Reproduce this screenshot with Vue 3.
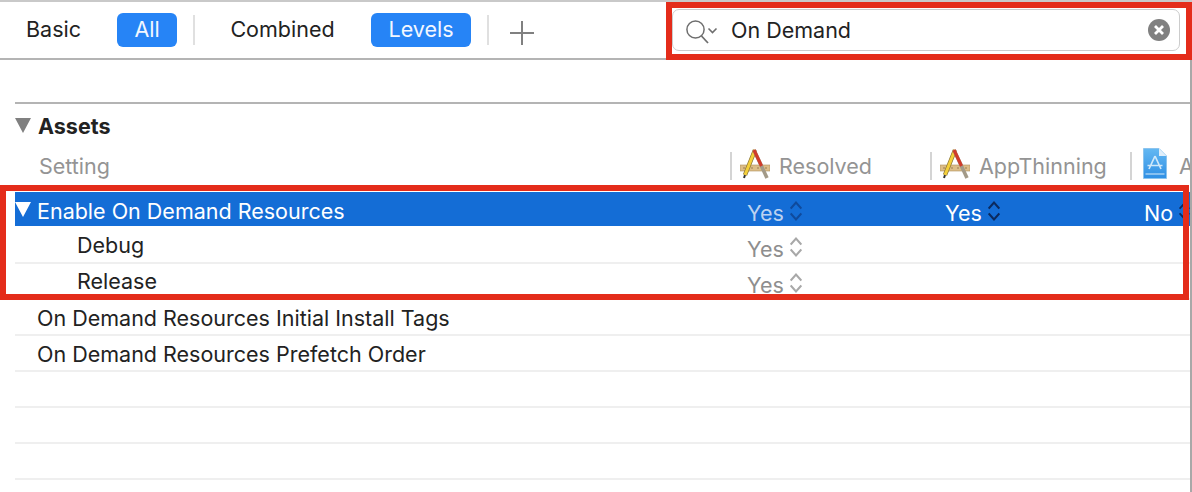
<template>
  <div class="page">
    <div class="toolbar">
      <span class="tab basic">Basic</span>
      <span class="tab active all">All</span>
      <i class="sep"></i>
      <span class="tab combined">Combined</span>
      <span class="tab active levels">Levels</span>
      <i class="sep"></i>
      <svg class="plus" width="24" height="24" viewBox="0 0 24 24">
        <path d="M0 12H24M12 0V24" stroke="#808080" stroke-width="2" />
      </svg>
      <div class="search">
        <svg class="search-icon" width="32" height="26" viewBox="0 0 32 26">
          <circle cx="9.5" cy="10.5" r="8.6" fill="none" stroke="#6e6e6e" stroke-width="1.5" />
          <path d="M15.5 17L22 24" stroke="#6e6e6e" stroke-width="1.8" />
          <path d="M22.5 9.5L26.5 13.5L30.5 9.5" fill="none" stroke="#6e6e6e" stroke-width="1.6" />
        </svg>
        <span class="search-text">On Demand</span>
        <svg class="clear" width="22" height="22" viewBox="0 0 22 22">
          <circle cx="11" cy="11" r="11" fill="#808080" />
          <path d="M7 7L15 15M15 7L7 15" stroke="#fff" stroke-width="2.8" />
        </svg>
      </div>
    </div>

    <div class="section">
      <div class="section-title">
        <span class="tri gray"></span>
        <span>Assets</span>
      </div>
      <div class="row head">
        <span class="name">Setting</span>
        <span v-for="col in columns" :key="col.label" class="col-head">
          <svg v-if="col.icon === 'tool'" class="tool-icon" width="30" height="30" viewBox="0 0 30 30">
            <rect x="0" y="16" width="30" height="6" fill="#dcbd88" stroke="#b08f5c" stroke-width="0.6" />
            <path d="M4 18V20M8 18V20M12 18V20M18 18V20M22 18V20M26 18V20" stroke="#8a6f45" stroke-width="0.8" />
            <path d="M15 1L5 26" stroke="#8a7436" stroke-width="4.4" />
            <path d="M15 1L5 26" stroke="#f4cf3a" stroke-width="3" />
            <path d="M5 26L4 29" stroke="#333" stroke-width="2" />
            <path d="M14 1L27 29" stroke="#a39a88" stroke-width="3.6" />
            <path d="M14 1L21.5 17" stroke="#cf3b2a" stroke-width="3.2" />
          </svg>
          <svg v-else class="tool-icon app" width="24" height="31" viewBox="0 0 24 31">
            <defs>
              <linearGradient id="appFill" x1="0" y1="0" x2="0" y2="1">
                <stop offset="0" stop-color="#64b8f2" />
                <stop offset="1" stop-color="#2f8fe4" />
              </linearGradient>
            </defs>
            <path d="M0.5 0.5H16L23.5 8V30.5H0.5Z" fill="url(#appFill)" stroke="#8cc4ee" stroke-width="1" />
            <path d="M16 0.5V8H23.5Z" fill="#e0eefa" />
            <path d="M2.5 26H21.5" stroke="#d8ecfa" stroke-width="1" />
            <path d="M12 8L6 21M12 8L18 21M4.5 17.5H19.5" stroke="#cfe8fa" stroke-width="1.7" fill="none" />
          </svg>
          {{ col.label }}
        </span>
      </div>

      <div
        v-for="row in rows"
        :key="row.id"
        class="row"
        :class="{ selected: row.selected, line: !row.selected, child: row.child }"
      >
        <span class="name">
          <span v-if="row.selected" class="tri white"></span>
          {{ row.label }}
        </span>
        <span v-for="(cell, i) in row.cells" :key="i" class="cell" :class="[`col-${i}`, { bold: row.selected && i > 0 }]">
          {{ cell }}
          <svg class="stepper" width="12" height="20" viewBox="0 0 12 20">
            <path d="M0.7 7.5L6 1.5L11.3 7.5M0.7 12.5L6 18.5L11.3 12.5" fill="none" stroke="currentColor" stroke-width="2" />
          </svg>
        </span>
      </div>
    </div>

    <div class="edge"></div>
    <div class="mark mark-search"></div>
    <div class="mark mark-rows"></div>
  </div>
</template>

<script setup>
const columns = [
  { label: 'Resolved', icon: 'tool' },
  { label: 'AppThinning', icon: 'tool' },
  { label: 'A', icon: 'app' },
];

const rows = [
  { id: 1, label: 'Enable On Demand Resources', selected: true, cells: ['Yes', 'Yes', 'No'] },
  { id: 2, label: 'Debug', child: true, cells: ['Yes'] },
  { id: 3, label: 'Release', child: true, cells: ['Yes'] },
  { id: 4, label: 'On Demand Resources Initial Install Tags', cells: [] },
  { id: 5, label: 'On Demand Resources Prefetch Order', cells: [] },
  { id: 6, label: '', cells: [] },
  { id: 7, label: '', cells: [] },
  { id: 8, label: '', cells: [] },
];
</script>

<style>
body {
  background: #fff;
}
</style>

<style scoped>
.page {
  position: relative;
  width: 1192px;
  height: 492px;
  overflow: hidden;
  background: #fff;
  font-family: Inter, "Liberation Sans", sans-serif;
  font-size: 21.5px;
  color: #222;
}

.toolbar {
  display: flex;
  align-items: center;
  height: 56px;
  border-top: 2px solid #c9c9c9;
  border-bottom: 2px solid #b4b4b4;
}

.tab {
  height: 34px;
  line-height: 33px;
  text-align: center;
  border-radius: 6px;
}

.tab.active {
  background: #2684f6;
  color: #f2f7ff;
}

.basic { margin-left: 26px; width: 55px; }
.all { margin-left: 36px; width: 60px; }
.combined { margin-left: 35px; width: 105px; }
.levels { margin-left: 36px; width: 100px; }

.sep {
  width: 2px;
  height: 30px;
  margin-left: 16px;
  background: #e0e0e0;
}

.plus {
  margin: 6px 0 0 21px;
}

.search {
  display: flex;
  align-items: center;
  box-sizing: border-box;
  width: 508px;
  height: 42px;
  margin-left: 138px;
  padding: 0 9px 0 13px;
  border: 1px solid #cccccc;
  border-radius: 7px;
}

.search-icon {
  margin-top: 4px;
}

.search-text {
  margin-left: 13px;
  flex: 1;
}

.section {
  margin: 42px 2px 0 15px;
  border-top: 2px solid #b4b4b4;
}

.section-title {
  display: flex;
  align-items: center;
  gap: 7px;
  height: 44px;
  font-weight: 700;
}

.tri {
  display: inline-block;
  width: 0;
  height: 0;
  border-left: 8.5px solid transparent;
  border-right: 8.5px solid transparent;
}

.tri.gray {
  margin-top: -2px;
  border-top: 15px solid #808080;
}

.tri.white {
  position: absolute;
  left: 0;
  top: 10px;
  border-top: 15px solid #fff;
}

.row {
  display: grid;
  grid-template-columns: 715px 200px 200px 60px;
  align-items: center;
  box-sizing: border-box;
  height: 36px;
  position: relative;
  white-space: nowrap;
}

.head {
  height: 36px;
  margin-bottom: 8px;
  color: #949494;
}

.name {
  padding-left: 24px;
}

.line .name {
  padding-left: 22px;
  padding-top: 1px;
}

.line.child .name {
  padding-left: 62px;
  padding-top: 0;
  padding-bottom: 1px;
}

.col-head {
  display: flex;
  align-items: center;
  gap: 9px;
  height: 28px;
  border-left: 2px solid #d4d4d4;
  padding-left: 8px;
}

.tool-icon {
  flex: none;
  margin-top: -5px;
}

.tool-icon.app {
  margin-left: 3px;
  margin-right: 3px;
}

.line {
  border-bottom: 2px solid #efefef;
}

.selected {
  height: 34px;
  margin-bottom: 2px;
  background: #146dd6;
  color: #fff;
  overflow: hidden;
}

.selected .name {
  padding-left: 22px;
  padding-top: 3px;
}

.cell {
  display: flex;
  align-items: center;
  gap: 6px;
  padding-left: 17px;
  padding-top: 8px;
  color: #8e8e8e;
}

.stepper {
  margin-top: -4px;
  color: #a8a8a8;
}

.selected .cell { color: #bcd2f0; }
.selected .stepper { color: #0f4a9c; }
.selected .cell.bold { color: #fff; }
.selected .cell.bold .stepper { color: #0b2a5e; }
.cell.col-1 { padding-left: 15px; }
.cell.col-2 { padding-left: 14px; }

.edge {
  position: absolute;
  top: 60px;
  right: 0;
  bottom: 0;
  width: 2px;
  background: #a8a8a8;
}

.mark {
  position: absolute;
  box-sizing: border-box;
  border: 6px solid #e42c1a;
  pointer-events: none;
}

.mark-search {
  left: 666px;
  top: 2px;
  width: 526px;
  height: 58px;
}

.mark-rows {
  left: 0;
  top: 185px;
  width: 1189px;
  height: 115px;
}
</style>
